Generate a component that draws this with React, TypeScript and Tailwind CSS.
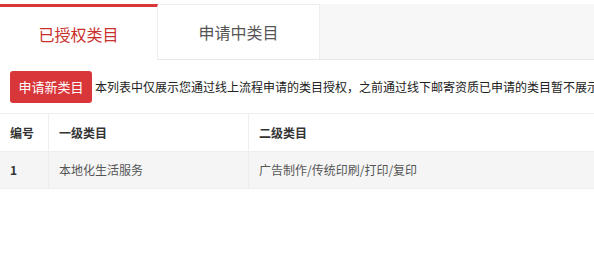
import React from "react";

export default function App() {
  const font = { fontFamily: '"Microsoft YaHei", "Noto Sans CJK SC", sans-serif' };
  return (
    <div className="w-[594px] h-[269px] bg-white overflow-hidden" style={font}>
      <div className="pt-[4px]">
        <div className="flex h-[56px] bg-[#f7f7f7] border-b border-[#e8e8e8]">
          <div className="w-[158px] bg-white border-t-[3px] border-[#d9363a] border-r border-r-[#eeeeee] flex items-center justify-center text-[16px] text-[#c9302c] -mb-px">
            已授权类目
          </div>
          <div className="w-[162px] bg-white border-t border-[#eeeeee] border-r border-r-[#eeeeee] flex items-center justify-center text-[16px] text-[#555]">
            申请中类目
          </div>
        </div>
      </div>
      <div className="flex items-center pl-[10px] pt-[11px] whitespace-nowrap">
        <button className="h-[32px] w-[82px] bg-[#d9363a] rounded-[3px] text-white text-[13px] shrink-0">
          申请新类目
        </button>
        <span className="ml-[3px] text-[12px] text-[#222]">
          本列表中仅展示您通过线上流程申请的类目授权，之前通过线下邮寄资质已申请的类目暂不展示
        </span>
      </div>
      <div className="mt-[10px] border-t border-[#eeeeee]">
        <div className="flex h-[37px] text-[12px] text-[#333] font-bold">
          <div className="w-[49px] pl-[10px] flex items-center border-r border-[#eeeeee]">编号</div>
          <div className="w-[200px] pl-[10px] flex items-center border-r border-[#eeeeee]">一级类目</div>
          <div className="flex-1 pl-[10px] flex items-center">二级类目</div>
        </div>
        <div className="flex h-[38px] text-[12px] text-[#555] bg-[#f5f5f5] border-t border-b border-[#eeeeee]">
          <div className="w-[49px] pl-[10px] flex items-center border-r border-[#eeeeee] font-bold text-[#333]">1</div>
          <div className="w-[200px] pl-[10px] flex items-center border-r border-[#eeeeee]">本地化生活服务</div>
          <div className="flex-1 pl-[10px] flex items-center">广告制作/传统印刷/打印/复印</div>
        </div>
      </div>
    </div>
  );
}
